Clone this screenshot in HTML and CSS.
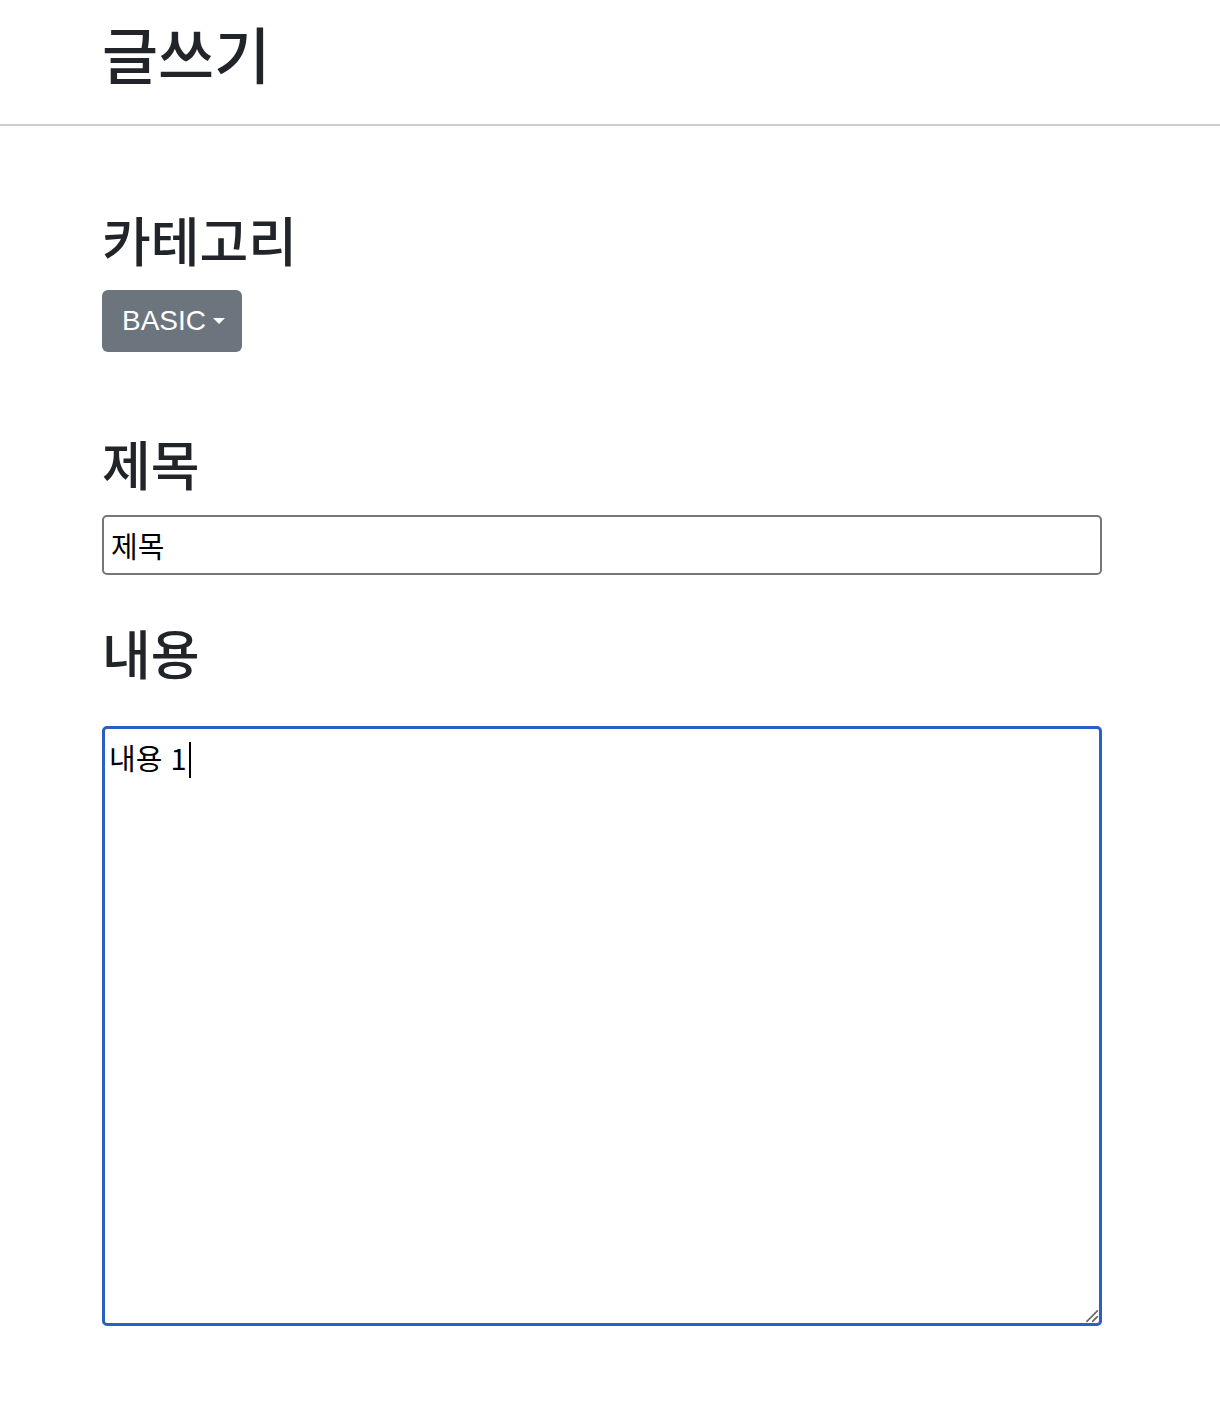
FILE: index.html
```html
<!DOCTYPE html>
<html lang="ko">
<head>
  <meta charset="utf-8">
  <link rel="stylesheet" href="styles.css">
</head>
<body>
  <header class="page-header">
    <div class="container">
      <h1 class="page-title">글쓰기</h1>
    </div>
  </header>

  <main class="container write-form">
    <section class="field">
      <h2 class="field-label">카테고리</h2>
      <button class="dropdown-btn" type="button">BASIC<span class="caret"></span></button>
    </section>

    <section class="field">
      <h2 class="field-label">제목</h2>
      <input class="text-input" type="text" value="제목">
    </section>

    <section class="field">
      <h2 class="field-label">내용</h2>
      <div class="textarea-box">
        <span class="textarea-text">내용 1</span><span class="cursor"></span>
        <svg class="grip" viewBox="0 0 14 14">
          <path d="M3 13 L13 3 M8 13 L13 8" stroke="#666" stroke-width="1.4" fill="none"/>
        </svg>
      </div>
    </section>
  </main>
</body>
</html>
```

FILE: styles.css
```css
* {
  margin: 0;
  padding: 0;
  box-sizing: border-box;
}

body {
  font-family: "Liberation Sans", "Noto Sans CJK KR", sans-serif;
  color: #212529;
  background: #fff;
}

.container {
  width: 1000px;
  margin-left: 102px;
}

.page-header {
  height: 126px;
  border-bottom: 2px solid #cdcdcd;
}

.page-title {
  font-family: "Noto Sans CJK KR", sans-serif;
  font-size: 61px;
  font-weight: 500;
  line-height: 106px;
}

.write-form {
  padding-top: 82px;
}

.field-label {
  font-family: "Noto Sans CJK KR", sans-serif;
  font-size: 53px;
  font-weight: 500;
  line-height: 62px;
}

.field {
  margin-bottom: 80px;
}

.field:nth-child(2) {
  margin-bottom: 46px;
}

.dropdown-btn {
  margin-top: 20px;
  display: flex;
  align-items: center;
  width: 140px;
  height: 62px;
  padding: 0 0 0 20px;
  background: #6c757d;
  border: none;
  border-radius: 6px;
  color: #fff;
  font-family: "Liberation Sans", sans-serif;
  font-size: 28px;
}

.caret {
  margin-left: 7px;
  border-top: 6px solid #fff;
  border-left: 6px solid transparent;
  border-right: 6px solid transparent;
}

.text-input {
  display: block;
  margin-top: 21px;
  width: 1000px;
  height: 60px;
  padding: 0 7px;
  border: 2px solid #767676;
  border-radius: 5px;
  font-family: "Noto Sans CJK KR", sans-serif;
  font-size: 29px;
  color: #000;
  outline: none;
}

.textarea-box {
  position: relative;
  margin-top: 43px;
  width: 1000px;
  height: 600px;
  padding: 4px 4px;
  border: 3px solid #2a5fc4;
  border-radius: 5px;
  font-family: "Noto Sans CJK KR", sans-serif;
  font-size: 29px;
  line-height: 48px;
  color: #000;
}

.cursor {
  display: inline-block;
  width: 2px;
  height: 36px;
  margin-left: 2px;
  background: #000;
  vertical-align: -8px;
}

.grip {
  position: absolute;
  right: 0;
  bottom: 0;
  width: 16px;
  height: 16px;
}
```
